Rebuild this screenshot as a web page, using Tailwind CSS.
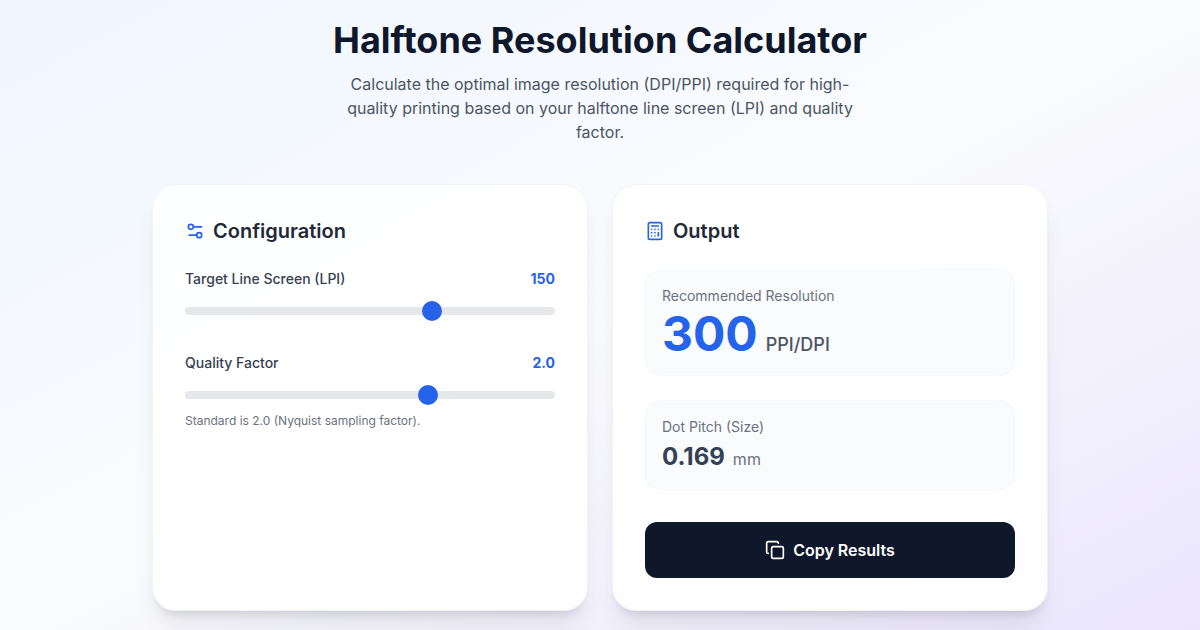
<!DOCTYPE html>
<html lang="en">
<head>
    <meta charset="UTF-8">
    <meta name="viewport" content="width=device-width, initial-scale=1.0">
    <title>Halftone Resolution Calculator</title>
    <script src="https://cdn.jsdelivr.net/npm/@tailwindcss/browser@4"></script>
</head>
<body class="min-h-screen bg-gradient-to-br from-[#eff6ff] via-[#fafbfd] to-[#ebe6fd] font-['Inter',sans-serif] text-[#0f172a]">
    <main class="mx-auto flex w-[896px] flex-col items-center pt-5 pb-4">
        <h1 class="text-4xl font-bold text-[#0f172a]">Halftone Resolution Calculator</h1>
        <p class="mt-3 max-w-lg text-center text-base leading-6 text-[#4b5563]">Calculate the optimal image resolution (DPI/PPI) required for high-quality printing based on your halftone line screen (LPI) and quality factor.</p>

        <div class="mt-10 grid w-full grid-cols-2 gap-6">
            <!-- Configuration card -->
            <section class="flex h-[427px] flex-col rounded-3xl border border-[#e2e8f0]/50 bg-white/90 p-8 shadow-[0_20px_25px_-5px_rgba(0,0,0,0.08),0_8px_10px_-6px_rgba(0,0,0,0.12)]">
                <h2 class="mb-6 flex items-center gap-2 text-xl leading-7 font-semibold text-[#1f2937]">
                    <svg class="size-5 text-[#2563eb]" xmlns="http://www.w3.org/2000/svg" viewBox="0 0 24 24" fill="none" stroke="currentColor" stroke-width="2" stroke-linecap="round" stroke-linejoin="round"><path d="M20 7h-9"/><path d="M14 17H5"/><circle cx="17" cy="17" r="3"/><circle cx="7" cy="7" r="3"/></svg>
                    Configuration
                </h2>

                <div class="flex justify-between text-sm leading-5">
                    <label class="font-medium text-[#374151]">Target Line Screen (LPI)</label>
                    <span class="font-bold text-[#2563eb]">150</span>
                </div>
                <input type="range" min="60" max="193" value="150" class="mt-[18px] block h-2 w-full cursor-pointer appearance-none rounded-lg bg-[#e5e7eb] [&::-webkit-slider-thumb]:size-5 [&::-webkit-slider-thumb]:appearance-none [&::-webkit-slider-thumb]:rounded-full [&::-webkit-slider-thumb]:bg-[#2563eb]">

                <div class="mt-[38px] flex justify-between text-sm leading-5">
                    <label class="font-medium text-[#374151]">Quality Factor</label>
                    <span class="font-bold text-[#2563eb]">2.0</span>
                </div>
                <input type="range" min="1" max="2.5" step="0.1" value="2" class="mt-[18px] block h-2 w-full cursor-pointer appearance-none rounded-lg bg-[#e5e7eb] [&::-webkit-slider-thumb]:size-5 [&::-webkit-slider-thumb]:appearance-none [&::-webkit-slider-thumb]:rounded-full [&::-webkit-slider-thumb]:bg-[#2563eb]">
                <p class="mt-3.5 text-xs leading-4 text-[#6b7280]">Standard is 2.0 (Nyquist sampling factor).</p>
            </section>

            <!-- Output card -->
            <section class="flex h-[427px] flex-col rounded-3xl border border-[#e2e8f0]/50 bg-white/90 p-8 shadow-[0_20px_25px_-5px_rgba(0,0,0,0.08),0_8px_10px_-6px_rgba(0,0,0,0.12)]">
                <h2 class="mb-6 flex items-center gap-2 text-xl leading-7 font-semibold text-[#1f2937]">
                    <svg class="size-5 text-[#2563eb]" xmlns="http://www.w3.org/2000/svg" viewBox="0 0 24 24" fill="none" stroke="currentColor" stroke-width="2" stroke-linecap="round" stroke-linejoin="round"><rect width="16" height="20" x="4" y="2" rx="2"/><line x1="8" x2="16" y1="6" y2="6"/><line x1="16" x2="16" y1="14" y2="18"/><path d="M16 10h.01"/><path d="M12 10h.01"/><path d="M8 10h.01"/><path d="M12 14h.01"/><path d="M8 14h.01"/><path d="M12 18h.01"/><path d="M8 18h.01"/></svg>
                    Output
                </h2>

                <div class="rounded-2xl border border-[#f1f5f9]/50 bg-[#f8fafc]/80 p-4">
                    <div class="text-sm leading-5 text-[#6b7280]">Recommended Resolution</div>
                    <div class="mt-1 flex items-baseline gap-2">
                        <span class="text-5xl leading-none font-bold text-[#2563eb]">300</span>
                        <span class="text-lg font-medium text-[#4b5563]">PPI/DPI</span>
                    </div>
                </div>

                <div class="mt-6 rounded-2xl border border-[#f1f5f9]/50 bg-[#f8fafc]/80 p-4">
                    <div class="text-sm leading-5 text-[#6b7280]">Dot Pitch (Size)</div>
                    <div class="mt-1 flex items-baseline gap-2">
                        <span class="text-2xl leading-8 font-bold text-[#334155]">0.169</span>
                        <span class="text-base text-[#6b7280]">mm</span>
                    </div>
                </div>

                <button class="mt-8 flex h-14 w-full items-center justify-center gap-2 rounded-xl bg-[#0f172a] font-semibold text-white">
                    <svg class="size-5" xmlns="http://www.w3.org/2000/svg" viewBox="0 0 24 24" fill="none" stroke="currentColor" stroke-width="2" stroke-linecap="round" stroke-linejoin="round"><rect width="14" height="14" x="8" y="8" rx="2" ry="2"/><path d="M4 16c-1.1 0-2-.9-2-2V4c0-1.1.9-2 2-2h10c1.1 0 2 .9 2 2"/></svg>
                    Copy Results
                </button>
            </section>
        </div>
    </main>
</body>
</html>
